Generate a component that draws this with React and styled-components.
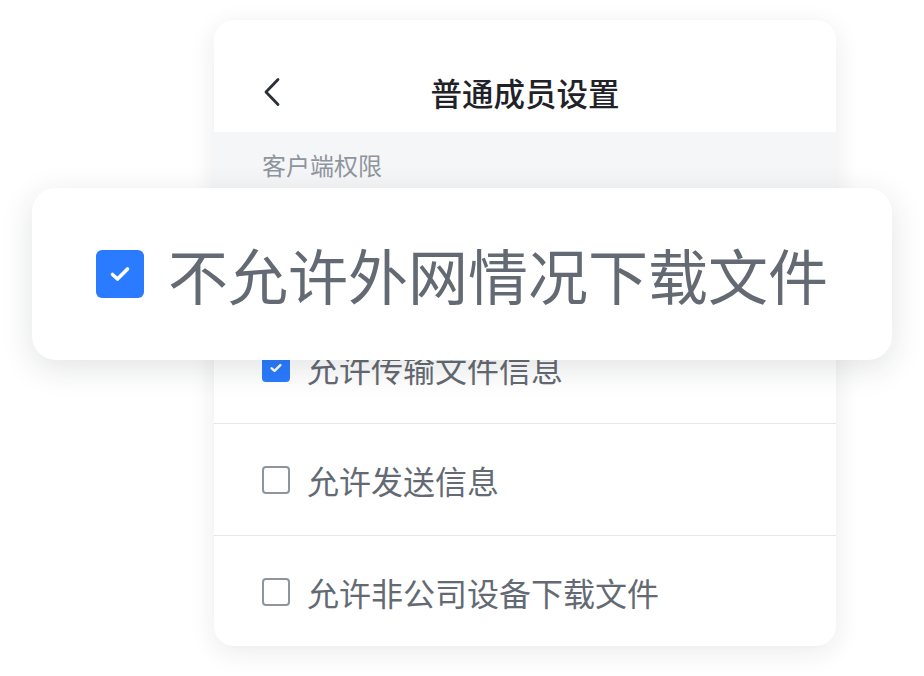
import React from "react";
import styled, { createGlobalStyle } from "styled-components";

const Global = createGlobalStyle`
  html, body { margin: 0; padding: 0; background: #ffffff; }
  body { font-family: "Noto Sans CJK SC", "Noto Sans", sans-serif; }
`;

const Page = styled.div`
  position: relative;
  width: 924px;
  height: 676px;
  padding: 20px 0 0 214px;
  box-sizing: border-box;
  overflow: hidden;
`;

const Card = styled.div`
  width: 622px;
  height: 626px;
  background: #fff;
  border-radius: 20px;
  box-shadow: 0 6px 26px rgba(31, 35, 41, 0.09);
  overflow: hidden;
  display: flex;
  flex-direction: column;
`;

const Header = styled.div`
  height: 112px;
  flex-shrink: 0;
  box-sizing: border-box;
  padding: 32px 48px 0;
  display: grid;
  grid-template-columns: 40px 1fr 40px;
  align-items: center;
`;

const Back = styled.div`
  display: flex;
  align-items: center;
  height: 78px;
`;

const Title = styled.div`
  text-align: center;
  font-size: 31.5px;
  font-weight: 500;
  color: #1f2329;
  line-height: 78px;
`;

const Section = styled.div`
  height: 68px;
  flex-shrink: 0;
  box-sizing: border-box;
  padding: 0 0 4px 48px;
  background: #f5f6f7;
  display: flex;
  align-items: center;
  font-size: 24px;
  color: #8f959e;
`;

const Row = styled.div`
  height: ${(p) => p.h || 112}px;
  flex-shrink: 0;
  box-sizing: border-box;
  display: flex;
  align-items: center;
  gap: 17px;
  padding-left: 48px;
  border-bottom: ${(p) => (p.last ? "none" : "1px solid #e4e6ea")};
`;

const RowText = styled.span`
  font-size: 32px;
  color: #646a73;
  line-height: 1;
`;

const Box = styled.div`
  width: ${(p) => p.size}px;
  height: ${(p) => p.size}px;
  box-sizing: border-box;
  border-radius: ${(p) => p.radius}px;
  flex-shrink: 0;
  display: flex;
  align-items: center;
  justify-content: center;
  background: ${(p) => (p.checked ? "#2a7bff" : "#fff")};
  border: ${(p) => (p.checked ? "none" : "2px solid #8f959e")};
`;

const Overlay = styled.div`
  position: absolute;
  left: 32px;
  top: 188px;
  width: 860px;
  height: 172px;
  background: #fff;
  border-radius: 24px;
  box-shadow: 0 8px 32px rgba(31, 35, 41, 0.13);
  display: flex;
  align-items: center;
  gap: 24px;
  padding-left: 64px;
  box-sizing: border-box;
`;

const BigText = styled.span`
  font-size: 60px;
  color: #646a73;
  line-height: 1;
`;

const Check = ({ size, radius, checked, stroke }) => (
  <Box size={size} radius={radius} checked={checked}>
    {checked && (
      <svg width={size * 0.5} height={size * 0.5} viewBox="0 0 24 24">
        <polyline
          points="4.5,12.5 9.5,17 19.5,7"
          fill="none"
          stroke="#fff"
          strokeWidth={stroke}
          strokeLinecap="round"
          strokeLinejoin="round"
        />
      </svg>
    )}
  </Box>
);

export default function App() {
  return (
    <>
      <Global />
      <Page>
        <Card>
          <Header>
            <Back>
              <svg width="20" height="30" viewBox="0 0 20 30">
                <polyline
                  points="16,2.5 4,15 16,27.5"
                  fill="none"
                  stroke="#2b2f36"
                  strokeWidth="2.8"
                  strokeLinecap="round"
                  strokeLinejoin="round"
                />
              </svg>
            </Back>
            <Title>普通成员设置</Title>
            <div />
          </Header>
          <Section>客户端权限</Section>
          <Row>
            <Check size={28} radius={4} stroke={4.2} checked />
            <RowText>不允许外网情况下载文件</RowText>
          </Row>
          <Row>
            <Check size={28} radius={4} stroke={4.2} checked />
            <RowText>允许传输文件信息</RowText>
          </Row>
          <Row>
            <Check size={28} radius={4} />
            <RowText>允许发送信息</RowText>
          </Row>
          <Row last>
            <Check size={28} radius={4} />
            <RowText>允许非公司设备下载文件</RowText>
          </Row>
        </Card>
        <Overlay>
          <Check size={48} radius={6} stroke={3.6} checked />
          <BigText>不允许外网情况下载文件</BigText>
        </Overlay>
      </Page>
    </>
  );
}
